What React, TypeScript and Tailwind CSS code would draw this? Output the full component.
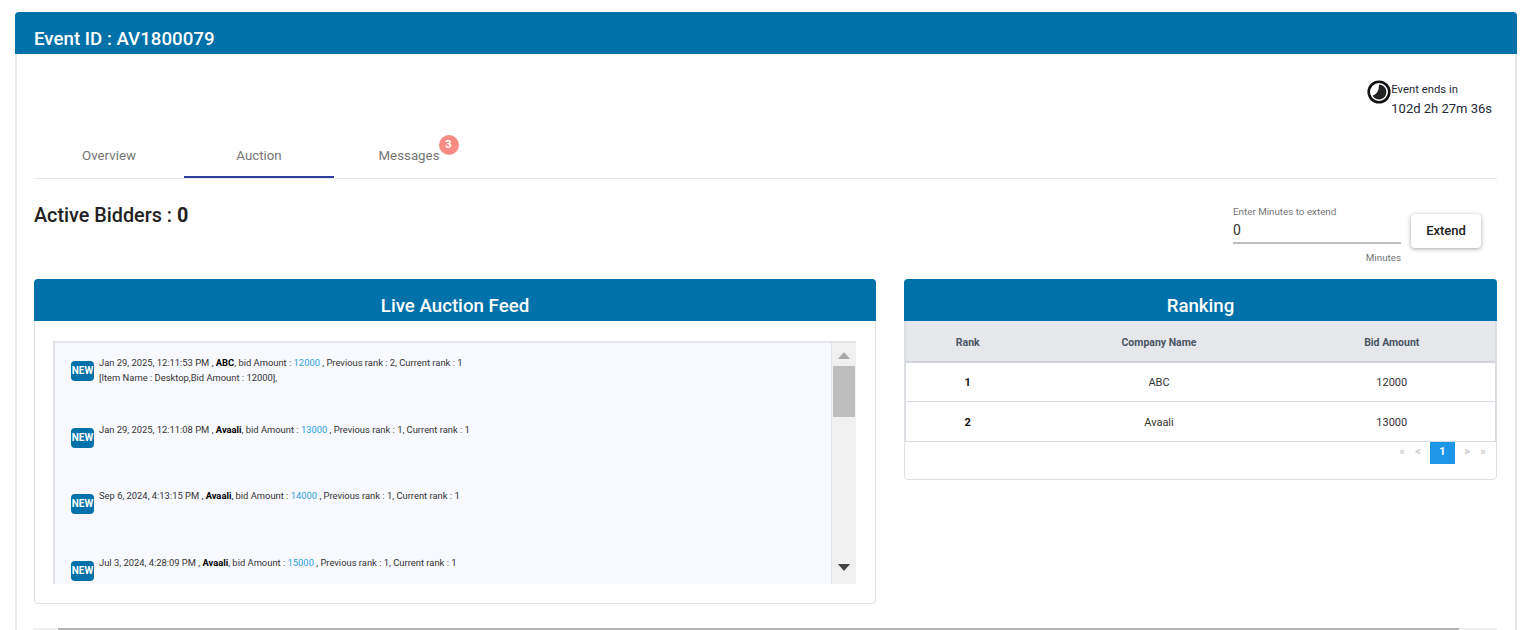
const feed = [
  { when: "Jan 29, 2025, 12:11:53 PM", name: "ABC", amount: "12000", prev: 2, item: "[Item Name : Desktop,Bid Amount : 12000]," },
  { when: "Jan 29, 2025, 12:11:08 PM", name: "Avaali", amount: "13000", prev: 1 },
  { when: "Sep 6, 2024, 4:13:15 PM", name: "Avaali", amount: "14000", prev: 1 },
  { when: "Jul 3, 2024, 4:28:09 PM", name: "Avaali", amount: "15000", prev: 1 },
];

const ranks = [
  { rank: 1, company: "ABC", amount: 12000 },
  { rank: 2, company: "Avaali", amount: 13000 },
];

function ClockIcon() {
  return (
    <svg viewBox="0 0 24 24" className="h-6 w-6 shrink-0">
      <circle cx="12" cy="12" r="10.3" fill="#fff" stroke="#111" strokeWidth="2.6" />
      <path d="M12 4.6 A7.4 7.4 0 1 1 5.6 15.7 Q12 14 12 4.6 Z" fill="#222" />
    </svg>
  );
}

function PanelHeader({ title }: { title: string }) {
  return (
    <div className="flex h-[42px] items-end justify-center rounded-t bg-[#0071a9] pb-[1px] text-[18.7px] font-medium text-white">
      {title}
    </div>
  );
}

function FeedRow({ row }: { row: (typeof feed)[number] }) {
  return (
    <div className="flex h-[66.5px] shrink-0 items-start gap-[5px]">
      <div className="mt-[1px] flex h-5 w-[23px] shrink-0 items-center justify-center rounded-sm bg-[#0071a9] text-[10px] font-bold leading-none text-white">
        NEW
      </div>
      <div className="-mt-[5px] text-[9.38px] leading-[15px] text-[#333]">
        <div>
          {row.when} , <b className="text-black">{row.name}</b>, bid Amount : <span className="text-[#2f9fdc]">{row.amount}</span> , Previous rank : {row.prev}, Current rank : 1
        </div>
        {row.item && <div>{row.item}</div>}
      </div>
    </div>
  );
}

export default function App() {
  return (
    <div className="h-[630px] overflow-hidden bg-white pl-[15px] pr-[13px] pt-3 font-['Roboto',sans-serif]">
      <div className="h-[700px] rounded-t border-x-2 border-[#e8e8e8]">
        <div className="-mx-[2px] flex h-[42px] items-end rounded-t bg-[#0071a9] px-[19px] pb-[1px] text-[18.7px] font-medium text-white">
          Event ID : AV1800079
        </div>

        <div className="pl-[17px] pr-[18px]">
          {/* Timer */}
          <div className="flex h-[81px] justify-end pr-[5px] pt-[26px]">
            <ClockIcon />
            <div className="pt-px text-[#1f2937]">
              <div className="text-[11.3px] leading-[18px]">Event ends in</div>
              <div className="text-[13px] leading-[20px]">102d 2h 27m 36s</div>
            </div>
          </div>

          {/* Tabs */}
          <div className="flex h-[44px] border-b border-[#e8e8e8] text-[13.3px] text-[#757575]">
            <div className="flex w-[150px] items-center justify-center border-b-2 border-transparent">Overview</div>
            <div className="flex w-[150px] items-center justify-center border-b-2 border-[#303f9f]">Auction</div>
            <div className="flex w-[150px] items-center justify-center border-b-2 border-transparent">
              <span className="relative">
                Messages
                <span className="absolute -right-[19px] -top-[11px] flex h-5 w-5 items-center justify-center rounded-full bg-[#f88c85] pt-px text-[11px] font-bold text-white">3</span>
              </span>
            </div>
          </div>

          {/* Bidders and extend */}
          <div className="flex h-[100px] items-start justify-between">
            <div className="pt-[24px] text-[19.8px] font-medium leading-[26px] text-[#212121]">
              Active Bidders : <b className="font-bold">0</b>
            </div>
            <div className="flex items-start gap-[10px] pr-4 pt-[27px]">
              <div className="w-[168px]">
                <div className="text-[9.8px] leading-3 text-[#757575]">Enter Minutes to extend</div>
                <div className="h-[26px] border-b-2 border-[#bdbdbd] pt-[4px] text-sm leading-4 text-[#333]">0</div>
                <div className="pt-[8px] text-right text-[9.8px] leading-3 text-[#757575]">Minutes</div>
              </div>
              <button className="mt-[8px] h-[34px] w-[70px] rounded bg-white text-[13px] font-medium text-[#212121] shadow-[0_1px_4px_rgba(0,0,0,0.35)]">
                Extend
              </button>
            </div>
          </div>

          {/* Panels */}
          <div className="flex items-start gap-7">
            <div className="h-[325px] w-[842px] rounded border border-[#dde1e4]">
              <div className="-mx-px -mt-px">
                <PanelHeader title="Live Auction Feed" />
              </div>
              <div className="ml-[18px] mr-[19px] mt-5 flex h-[243px] border-l-2 border-t-2 border-[#e3e4e9]">
                <div className="flex flex-1 flex-col overflow-hidden bg-[#f8f9fe] pl-[16px] pt-[17px]">
                  {feed.map((row) => (
                    <FeedRow key={row.amount} row={row} />
                  ))}
                </div>
                <div className="flex w-[25px] flex-col items-center border-l border-[#e0e0e0] bg-[#f0f0f0]">
                  <div className="mt-[9px] h-0 w-0 border-x-[6px] border-b-[7px] border-x-transparent border-b-[#a8a8a8]" />
                  <div className="mt-[7px] h-[51px] w-[22px] bg-[#bdbdbd]" />
                  <div className="mt-[147px] h-0 w-0 border-x-[6px] border-t-[7px] border-x-transparent border-t-[#444]" />
                </div>
              </div>
            </div>

            <div className="h-[201px] w-[593px] rounded border border-[#dde1e4]">
              <div className="-mx-px -mt-px">
                <PanelHeader title="Ranking" />
              </div>
              <table className="w-full table-fixed border-collapse border-x border-[#d8dce2] text-[11px] text-[#333]">
                <thead>
                  <tr className="h-[41px] border-b-2 border-[#d1d5db] bg-[#e5e7eb] text-[10.5px] text-[#4b5563]">
                    <th className="w-[124px] pt-[4px] font-bold">Rank</th>
                    <th className="w-[259px] pt-[4px] font-bold">Company Name</th>
                    <th className="pt-[4px] font-bold">Bid Amount</th>
                  </tr>
                </thead>
                <tbody>
                  {ranks.map((r) => (
                    <tr key={r.rank} className="h-[39.5px] border-b border-[#d8dce2] text-center">
                      <td className="pt-[3px] font-bold text-[#111]">{r.rank}</td>
                      <td className="pt-[3px]">{r.company}</td>
                      <td className="pt-[3px]">{r.amount}</td>
                    </tr>
                  ))}
                </tbody>
              </table>
              <div className="flex h-[22px] items-center justify-end gap-[6px] pr-[8px] text-[11px] font-bold text-[#c8c8c8]">
                <span className="w-[10px] text-center">«</span>
                <span className="mr-px w-[10px] text-center">&lt;</span>
                <div className="flex h-[22px] w-[25px] items-center justify-center bg-[#1e96e8] text-[11px] font-bold text-white">1</div>
                <span className="ml-px w-[10px] text-center">&gt;</span>
                <span className="w-[10px] text-center">»</span>
              </div>
            </div>
          </div>

          {/* Horizontal scrollbar at the page fold */}
          <div className="mt-[24px] flex h-[3px] bg-[#f0f0f0]">
            <div className="ml-6 w-[1401px] bg-[#b5b5b5]" />
          </div>
        </div>
      </div>
    </div>
  );
}
